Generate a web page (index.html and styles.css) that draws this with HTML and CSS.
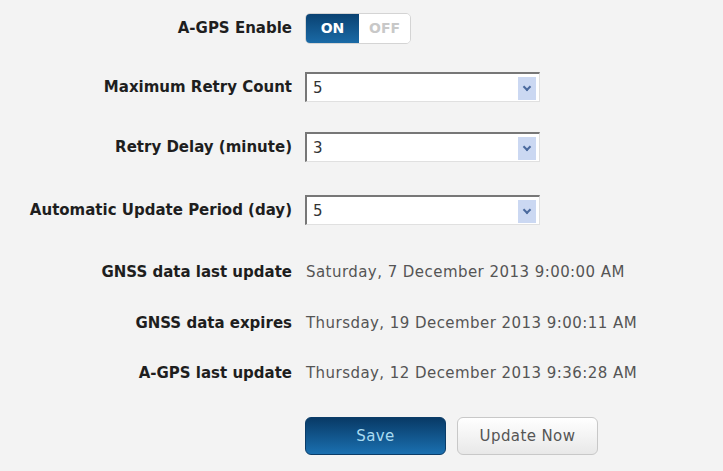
FILE: index.html
```html
<!DOCTYPE html>
<html lang="en">
<head>
  <meta charset="UTF-8">
  <title>A-GPS Settings</title>
  <link rel="stylesheet" href="styles.css">
</head>
<body>

<form class="settings">
  <div class="label">A-GPS Enable</div>
  <div class="value">
    <div class="toggle">
      <span class="toggle-on">ON</span>
      <span class="toggle-off">OFF</span>
    </div>
  </div>

  <div class="label">Maximum Retry Count</div>
  <div class="value">
    <div class="select"><span>5</span><i class="arrow"></i></div>
  </div>

  <div class="label">Retry Delay (minute)</div>
  <div class="value">
    <div class="select"><span>3</span><i class="arrow"></i></div>
  </div>

  <div class="label">Automatic Update Period (day)</div>
  <div class="value">
    <div class="select"><span>5</span><i class="arrow"></i></div>
  </div>

  <div class="label">GNSS data last update</div>
  <div class="value text">Saturday, 7 December 2013 9:00:00 AM</div>

  <div class="label">GNSS data expires</div>
  <div class="value text">Thursday, 19 December 2013 9:00:11 AM</div>

  <div class="label">A-GPS last update</div>
  <div class="value text">Thursday, 12 December 2013 9:36:28 AM</div>

  <div class="label"></div>
  <div class="value buttons">
    <button type="button" class="btn btn-save">Save</button>
    <button type="button" class="btn btn-update">Update Now</button>
  </div>
</form>

</body>
</html>
```

FILE: styles.css
```css
body {
  margin: 0;
  background-color: #f3f3f3;
  font-family: "DejaVu Sans", Verdana, sans-serif;
  font-size: 15px;
  color: #444;
}
.settings {
  display: grid;
  grid-template-columns: 292px 1fr;
  grid-template-rows: 56px 62px 58px 68px 56px 46px 54px 72px;
  column-gap: 8px;
  align-items: center;
}
.label {
  text-align: right;
  font-weight: bold;
  color: #1e1e1e;
  white-space: nowrap;
}
.text {
  padding-left: 6px;
  color: #555;
  letter-spacing: 0.45px;
  white-space: nowrap;
}

/* on/off switch */
.toggle {
  display: inline-flex;
  margin-left: 5px;
  border: 1px solid #d4d4d4;
  border-radius: 5px;
  overflow: hidden;
  height: 29px;
  font-weight: bold;
  font-size: 14px;
}
.toggle-on {
  width: 53px;
  display: flex;
  align-items: center;
  justify-content: center;
  color: #fff;
  background: linear-gradient(#0a4272, #1a6aa6);
}
.toggle-off {
  width: 51px;
  display: flex;
  align-items: center;
  justify-content: center;
  color: #c8c8c8;
  background: #fff;
}

/* dropdowns */
.select {
  display: flex;
  align-items: center;
  justify-content: space-between;
  width: 232px;
  height: 27px;
  margin-left: 5px;
  background: #fff;
  border-top: 2px solid #777;
  border-left: 2px solid #777;
  border-right: 1px solid #e0e0e0;
  border-bottom: 1px solid #e0e0e0;
}
.select span {
  padding-left: 6px;
  color: #333;
}
.arrow {
  width: 18px;
  height: 23px;
  margin-right: 3px;
  margin-top: 2px;
  background: #cbd8f2;
  position: relative;
}
.arrow::after {
  content: "";
  position: absolute;
  left: 6px;
  top: 7px;
  width: 4px;
  height: 4px;
  border-right: 2px solid #4b6a9e;
  border-bottom: 2px solid #4b6a9e;
  transform: rotate(45deg);
}

/* buttons */
.buttons {
  display: flex;
  gap: 11px;
  padding-left: 5px;
}
.btn {
  width: 141px;
  height: 38px;
  border-radius: 6px;
  font-family: inherit;
  font-size: 15px;
  letter-spacing: 0.4px;
  cursor: pointer;
}
.btn-save {
  border: 1px solid #0a3c68;
  background: linear-gradient(#083a66, #1a70b0);
  color: #a9dcf2;
}
.btn-update {
  border: 1px solid #c8c8c8;
  background: linear-gradient(#ffffff, #e8e8e8);
  color: #555;
}
```
